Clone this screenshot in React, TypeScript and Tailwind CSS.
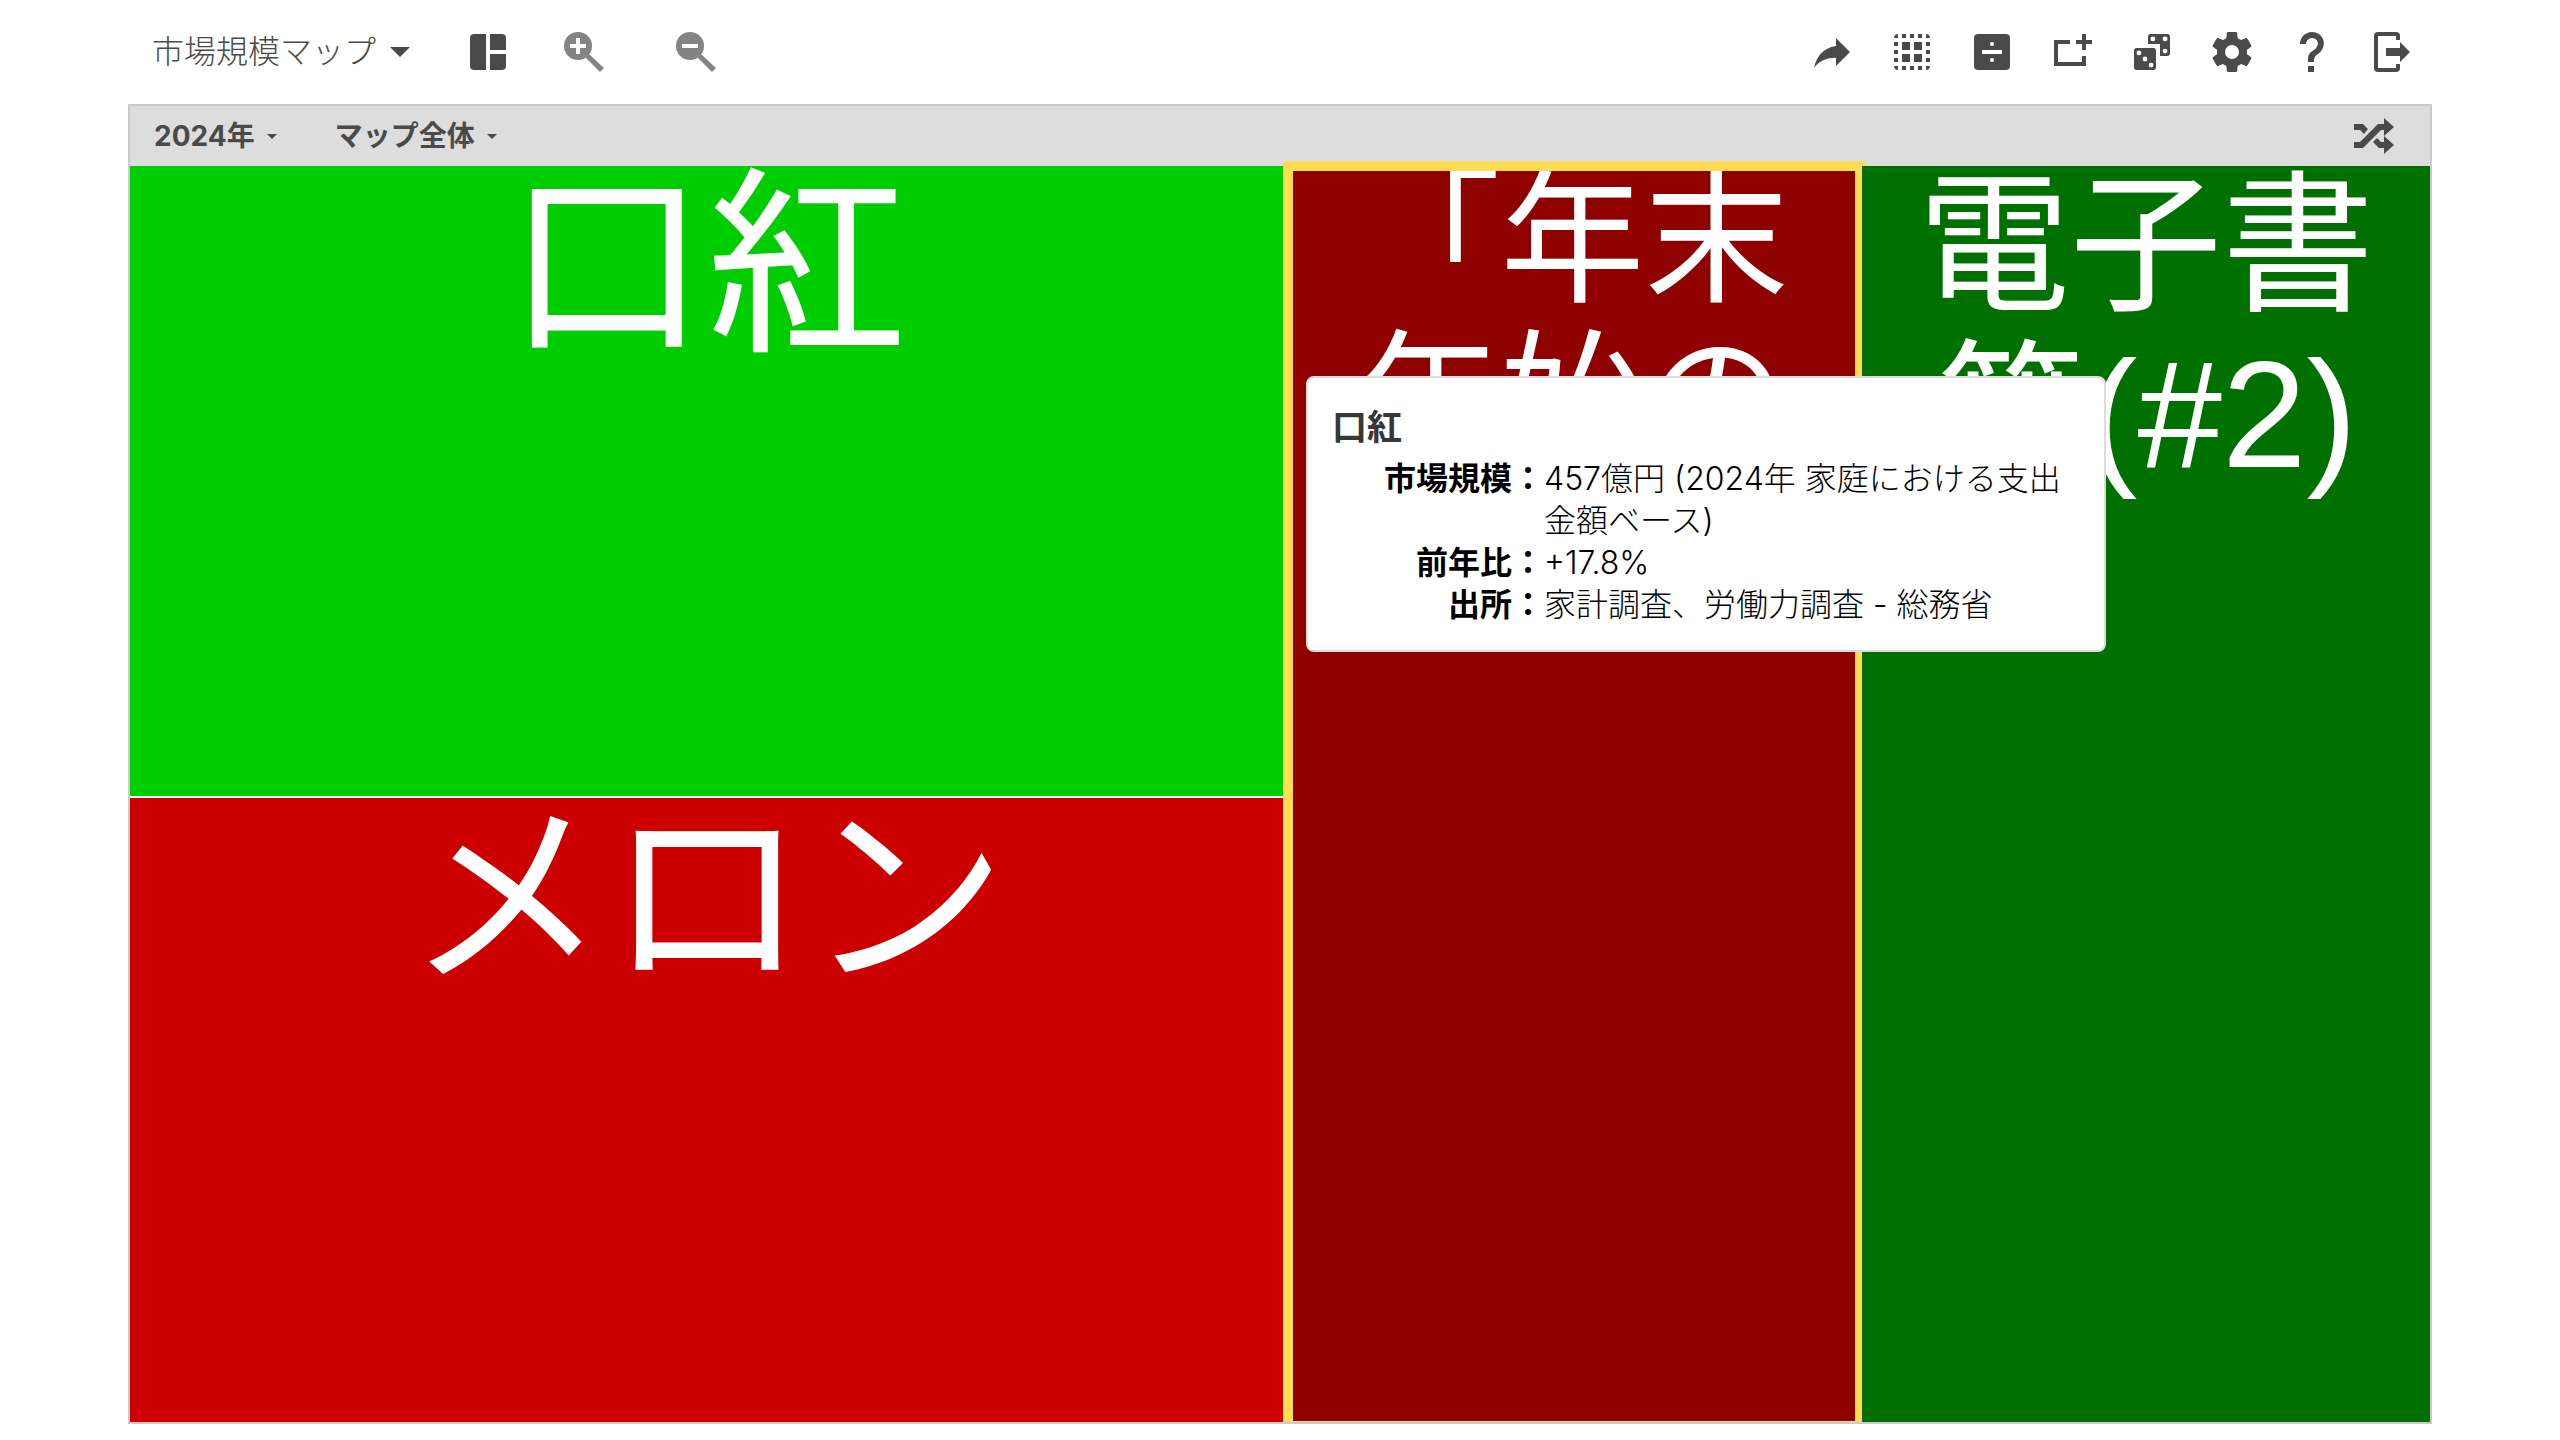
import type { ReactNode } from "react";
import clsx from "clsx";

const ICONS = {
  dashboard: "M5,3H11V21H5A2,2 0 0,1 3,19V5A2,2 0 0,1 5,3M13,3H19A2,2 0 0,1 21,5V11H13V3M13,13H21V19A2,2 0 0,1 19,21H13V13Z",
  share: "M21,12L14,5V9C7,10 4,15 3,20C5.5,16.5 9,14.9 14,14.9V19L21,12Z",
  group:
    "M5,3A2,2 0 0,0 3,5H5M7,3V5H9V3M11,3V5H13V3M15,3V5H17V3M19,3V5H21A2,2 0 0,0 19,3M3,7V9H5V7M7,7V11H11V7M13,7V11H17V7M19,7V9H21V7M3,11V13H5V11M19,11V13H21V11M7,13V17H11V13M13,13V17H17V13M3,15V17H5V15M19,15V17H21V15M3,19A2,2 0 0,0 5,21V19M7,19V21H9V19M11,19V21H13V19M15,19V21H17V19M19,19V21A2,2 0 0,0 21,19",
  divide:
    "M19,3H5A2,2 0 0,0 3,5V19A2,2 0 0,0 5,21H19A2,2 0 0,0 21,19V5A2,2 0 0,0 19,3M7,11H17V13H7V11M12,7A1,1 0 0,1 13,8A1,1 0 0,1 12,9A1,1 0 0,1 11,8A1,1 0 0,1 12,7M12,15A1,1 0 0,1 13,16A1,1 0 0,1 12,17A1,1 0 0,1 11,16A1,1 0 0,1 12,15Z",
  addBox: "M19,6H22V8H19V11H17V8H14V6H17V3H19V6M17,17V14H19V19H3V6H11V8H5V17H17Z",
  dice:
    "M19.78,3H11.22C10.55,3 10,3.55 10,4.22V8H16V14H19.78C20.45,14 21,13.45 21,12.78V4.22C21,3.55 20.45,3 19.78,3M12.44,6.67A1.23,1.23 0 1,1 12.44,4.21A1.23,1.23 0 0,1 12.44,6.67M18.56,12.78A1.23,1.23 0 1,1 18.56,10.32A1.23,1.23 0 0,1 18.56,12.78M18.56,6.67A1.23,1.23 0 1,1 18.56,4.21A1.23,1.23 0 0,1 18.56,6.67M4.22,10H12.78A1.22,1.22 0 0,1 14,11.22V19.78C14,20.45 13.45,21 12.78,21H4.22C3.55,21 3,20.45 3,19.78V11.22C3,10.55 3.55,10 4.22,10M8.5,14.28A1.22,1.22 0 1,0 8.5,16.72A1.22,1.22 0 0,0 8.5,14.28M5.44,11.22A1.22,1.22 0 1,0 5.44,13.66A1.22,1.22 0 0,0 5.44,11.22M11.55,17.33A1.22,1.22 0 1,0 11.55,19.77A1.22,1.22 0 0,0 11.55,17.33Z",
  cog: "M12,15.5A3.5,3.5 0 0,1 8.5,12A3.5,3.5 0 0,1 12,8.5A3.5,3.5 0 0,1 15.5,12A3.5,3.5 0 0,1 12,15.5M19.43,12.97C19.47,12.65 19.5,12.33 19.5,12C19.5,11.67 19.47,11.34 19.43,11L21.54,9.37C21.73,9.22 21.78,8.95 21.66,8.73L19.66,5.27C19.54,5.05 19.27,4.96 19.05,5.05L16.56,6.05C16.04,5.66 15.5,5.32 14.87,5.07L14.5,2.42C14.46,2.18 14.25,2 14,2H10C9.75,2 9.54,2.18 9.5,2.42L9.13,5.07C8.5,5.32 7.96,5.66 7.44,6.05L4.95,5.05C4.73,4.96 4.46,5.05 4.34,5.27L2.34,8.73C2.21,8.95 2.27,9.22 2.46,9.37L4.57,11C4.53,11.34 4.5,11.67 4.5,12C4.5,12.33 4.53,12.65 4.57,12.97L2.46,14.63C2.27,14.78 2.21,15.05 2.34,15.27L4.34,18.73C4.46,18.95 4.73,19.03 4.95,18.95L7.44,17.94C7.96,18.34 8.5,18.68 9.13,18.93L9.5,21.58C9.54,21.82 9.75,22 10,22H14C14.25,22 14.46,21.82 14.5,21.58L14.87,18.93C15.5,18.67 16.04,18.34 16.56,17.94L19.05,18.95C19.27,19.03 19.54,18.95 19.66,18.73L21.66,15.27C21.78,15.05 21.73,14.78 21.54,14.63L19.43,12.97Z",
  help: "M10,19H13V22H10V19M12,2C17.35,2.22 19.68,7.62 16.5,11.67C15.67,12.67 14.33,13.33 13.67,14.17C13,15 13,16 13,17H10C10,15.33 10,13.92 10.67,12.92C11.33,11.92 12.67,11.33 13.5,10.67C15.92,8.43 15.32,5.26 12,5A3,3 0 0,0 9,8H6A6,6 0 0,1 12,2Z",
  exit: "M16,17V14H9V10H16V7L21,12L16,17M5,2H14A2,2 0 0,1 16,4V6H14V4H5V20H14V18H16V20A2,2 0 0,1 14,22H5A2,2 0 0,1 3,20V4A2,2 0 0,1 5,2Z",
};

type IconName = keyof typeof ICONS;

function Icon({ name }: { name: IconName }) {
  return (
    <svg viewBox="0 0 24 24" className="size-12" fill="currentColor" fillRule="evenodd" aria-hidden="true">
      <path d={ICONS[name]} />
    </svg>
  );
}

function Magnifier({ plus = false }: { plus?: boolean }) {
  return (
    <svg viewBox="0 0 40 40" className="size-10" aria-hidden="true">
      <circle cx="14" cy="14" r="14" fill="currentColor" />
      <path d="M22 26L23 23L26 23L40 36L36 40Z" fill="currentColor" />
      <path d={plus ? "M6 12H12V6H16V12H22V16H16V22H12V16H6Z" : "M6 12H22V16H6Z"} fill="#fff" />
    </svg>
  );
}

function Shuffle() {
  return (
    <svg viewBox="0 0 40 36" className="h-9 w-10" fill="currentColor" aria-hidden="true">
      <path d="M0 6H9L14 11L10 16L6 12H0ZM0 24H6L24 6H30V0L40 9L30 18V12H27L9 30H0ZM19 24L23 20L27 24H30V18L40 27L30 36V30H25Z" />
    </svg>
  );
}

const actions: { name: IconName; label: string }[] = [
  { name: "share", label: "共有" },
  { name: "group", label: "グループ" },
  { name: "divide", label: "分割" },
  { name: "addBox", label: "追加" },
  { name: "dice", label: "ランダム" },
  { name: "cog", label: "設定" },
  { name: "help", label: "ヘルプ" },
  { name: "exit", label: "終了" },
];

const details = [
  { label: "市場規模", value: "457億円 (2024年 家庭における支出金額ベース)" },
  { label: "前年比", value: "+17.8%" },
  { label: "出所", value: "家計調査、労働力調査 - 総務省" },
];

function Tile({ className, children }: { className: string; children: ReactNode }) {
  return (
    <section
      className={clsx(
        "overflow-hidden text-center font-['Liberation_Sans','Noto_Sans_CJK_JP',sans-serif] text-white",
        className
      )}
    >
      <h2 className="-mt-1">{children}</h2>
    </section>
  );
}

function Tooltip() {
  return (
    <div
      role="tooltip"
      className="absolute left-[1176px] top-[270px] z-10 w-[800px] rounded-lg border-2 border-[#dcdcdc] bg-white px-6 pt-[26px] pb-6 text-black"
    >
      <h3 className="text-[35px] leading-[46px] font-bold text-[#373737]">口紅</h3>
      <dl className="mt-2 grid grid-cols-[212px_1fr] text-[32px] leading-[42px]">
        {details.map((d) => (
          <div key={d.label} className="contents">
            <dt className="text-right font-bold">{d.label}：</dt>
            <dd className="font-light">{d.value}</dd>
          </div>
        ))}
      </dl>
    </div>
  );
}

export default function App() {
  return (
    <div className="flex h-screen flex-col bg-white px-32 pb-4 font-['Inter','Noto_Sans_CJK_JP',sans-serif] text-[#4a4a4a]">
      <header className="flex h-[104px] shrink-0 items-center pr-4 pl-6">
        <button className="flex items-center gap-3.5 text-[32px] font-light">
          市場規模マップ
          <svg viewBox="0 0 20 10" className="h-[10px] w-5" fill="currentColor" aria-hidden="true">
            <path d="M0 0H20L10 10Z" />
          </svg>
        </button>
        <button aria-label="レイアウト" className="ml-[54px]">
          <Icon name="dashboard" />
        </button>
        <button aria-label="拡大" className="ml-[52px] text-[#848484]">
          <Magnifier plus />
        </button>
        <button aria-label="縮小" className="ml-[72px] text-[#848484]">
          <Magnifier />
        </button>
        <div className="ml-auto flex gap-8">
          {actions.map((a) => (
            <button key={a.name} aria-label={a.label}>
              <Icon name={a.name} />
            </button>
          ))}
        </div>
      </header>

      <main className="relative flex min-h-0 flex-1 flex-col border-2 border-[#cacaca]">
        <div className="flex h-[60px] shrink-0 items-center gap-[58px] bg-[#dddddd] pr-9 pl-6 text-[28px] font-bold">
          {["2024年", "マップ全体"].map((label) => (
            <button key={label} className="flex items-center gap-3">
              {label}
              <svg viewBox="0 0 10 5" className="h-[5px] w-[10px]" fill="currentColor" aria-hidden="true">
                <path d="M0 0H10L5 5Z" />
              </svg>
            </button>
          ))}
          <button aria-label="シャッフル" className="ml-auto">
            <Shuffle />
          </button>
        </div>

        <div className="grid min-h-0 flex-1 grid-cols-[1153fr_579fr_568fr]">
          <div className="grid min-h-0 grid-rows-[630fr_624fr] gap-[2px]">
            <Tile className="bg-[#00cd00] text-[200px] leading-[210px]">口紅</Tile>
            <Tile className="bg-[#cc0000] text-[200px] leading-[210px]">メロン</Tile>
          </div>
          <div className="relative min-h-0">
            <Tile className="h-full bg-[#8f0000] px-4 text-[144px] leading-[160px]">
              「年末
              <br />
              年始の
            </Tile>
            <div className="absolute -top-[5px] -right-[3px] bottom-0 left-0 border-10 border-b border-[#ffdc55]" />
          </div>
          <Tile className="relative bg-[#007000] text-[152px] leading-[168px]">
            電子書
            <br />
            籍(#2)
          </Tile>
        </div>
        <Tooltip />
      </main>
    </div>
  );
}
